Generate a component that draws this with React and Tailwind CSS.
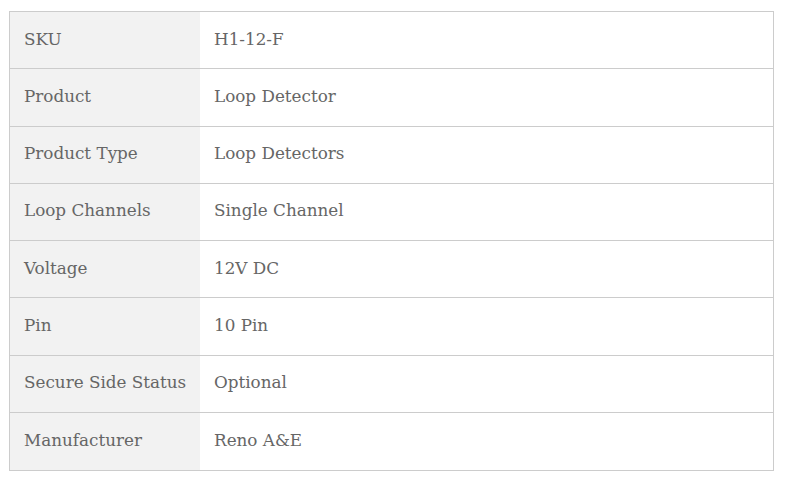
const rows = [
  ['SKU', 'H1-12-F'],
  ['Product', 'Loop Detector'],
  ['Product Type', 'Loop Detectors'],
  ['Loop Channels', 'Single Channel'],
  ['Voltage', '12V DC'],
  ['Pin', '10 Pin'],
  ['Secure Side Status', 'Optional'],
  ['Manufacturer', 'Reno A&E'],
]

export default function App() {
  return (
    <div className="bg-white w-[785px] h-[484px] pt-[11px] pl-[9px] font-['DejaVu_Serif',serif] text-[#666]">
      <div className="w-[765px] border border-[#cccccc]">
        {rows.map(([k, v], i) => (
          <div
            key={k}
            className={`flex h-[57.3px] ${i < rows.length - 1 ? 'border-b border-[#cccccc]' : ''}`}
          >
            <div className="w-[190px] shrink-0 bg-[#f2f2f2] pl-[14px] flex items-center text-[16.8px] pb-[2px]">{k}</div>
            <div className="flex-1 pl-[14px] flex items-center text-[16.8px] pb-[2px]">{v}</div>
          </div>
        ))}
      </div>
    </div>
  )
}
